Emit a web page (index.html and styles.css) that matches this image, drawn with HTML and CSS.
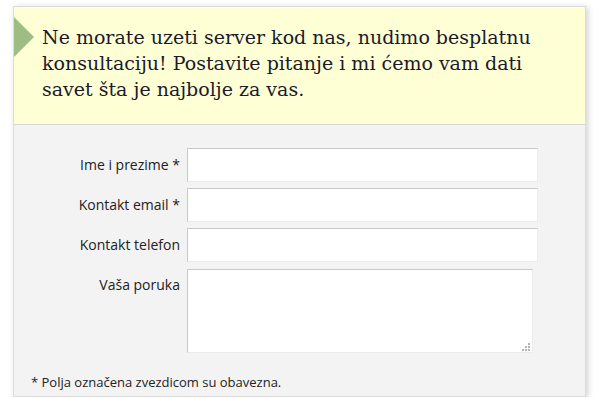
FILE: index.html
```html
<!DOCTYPE html>
<html lang="sr">

<head>
    <meta name="viewport" content="width=device-width, initial-scale=1">
    <meta charset="UTF-8">
    <title>Konsultacija</title>

    <link rel="stylesheet" href="styles.css">
</head>

<body>
    <div class="panel">
        <div class="panel-head">
            <span class="arrow"></span>
            <h2>Ne morate uzeti server kod nas, nudimo besplatnu konsultaciju! Postavite pitanje i mi ćemo vam dati savet šta je najbolje za vas.</h2>
        </div>

        <form class="contact-form">
            <div class="rows">
                <label for="name">Ime i prezime *</label>
                <input type="text" id="name" />

                <label for="email">Kontakt email *</label>
                <input type="text" id="email" />

                <label for="phone">Kontakt telefon</label>
                <input type="text" id="phone" />

                <label for="message">Vaša poruka</label>
                <div class="area-wrap">
                    <textarea id="message"></textarea>
                    <svg class="grip" width="8" height="8" viewBox="0 0 8 8">
                        <rect x="6" y="0" width="2" height="2" />
                        <rect x="3" y="3" width="2" height="2" />
                        <rect x="6" y="3" width="2" height="2" />
                        <rect x="0" y="6" width="2" height="2" />
                        <rect x="3" y="6" width="2" height="2" />
                        <rect x="6" y="6" width="2" height="2" />
                    </svg>
                </div>
            </div>

            <p class="note">* Polja označena zvezdicom su obavezna.</p>
        </form>
    </div>
</body>

</html>
```

FILE: styles.css
```css
body {
    margin: 0;
    padding: 6px 0 0 13px;
    background: #fff;
    font: 13px "Open Sans", sans-serif;
    color: #222;
}

.panel {
    width: 571px;
    border: 1px solid #dcdcdc;
    background: #f3f3f3;
    box-shadow: 2px 1px 6px rgba(0, 0, 0, 0.18);
}

.panel-head {
    position: relative;
    height: 117px;
    background: #ffffd6;
    border-bottom: 1px solid #d8d8d8;
}

.arrow {
    position: absolute;
    left: 0;
    top: 10px;
    width: 0;
    height: 0;
    border-top: 20px solid transparent;
    border-bottom: 20px solid transparent;
    border-left: 20px solid #9dbd85;
}

.panel-head h2 {
    margin: 0;
    padding: 17px 40px 0 28px;
    font: normal 19px/26px "DejaVu Serif", serif;
    color: #1a1a2a;
}

.contact-form {
    padding: 23px 0 0 0;
    height: 248px;
}

.rows {
    display: grid;
    grid-template-columns: 166px 351px;
    column-gap: 7px;
    row-gap: 6px;
}

.rows label {
    text-align: right;
    font-size: 14px;
    line-height: 34px;
    color: #222;
}

.rows input,
.rows textarea {
    box-sizing: border-box;
    margin: 0;
    padding: 4px 6px;
    background: #fff;
    border: 1px solid #ececec;
    border-top-color: #c8c8c8;
    border-left-color: #c8c8c8;
    font: 13px "Open Sans", sans-serif;
    outline: none;
}

.rows input {
    height: 34px;
}

.area-wrap {
    position: relative;
    margin-top: 1px;
    width: 346px;
    height: 84px;
}

.rows textarea {
    display: block;
    width: 346px;
    height: 84px;
    resize: none;
}

.grip {
    position: absolute;
    right: 3px;
    bottom: 2px;
    fill: #b4b4b4;
}

.note {
    margin: 20px 0 0 17px;
    line-height: 18px;
}
```
